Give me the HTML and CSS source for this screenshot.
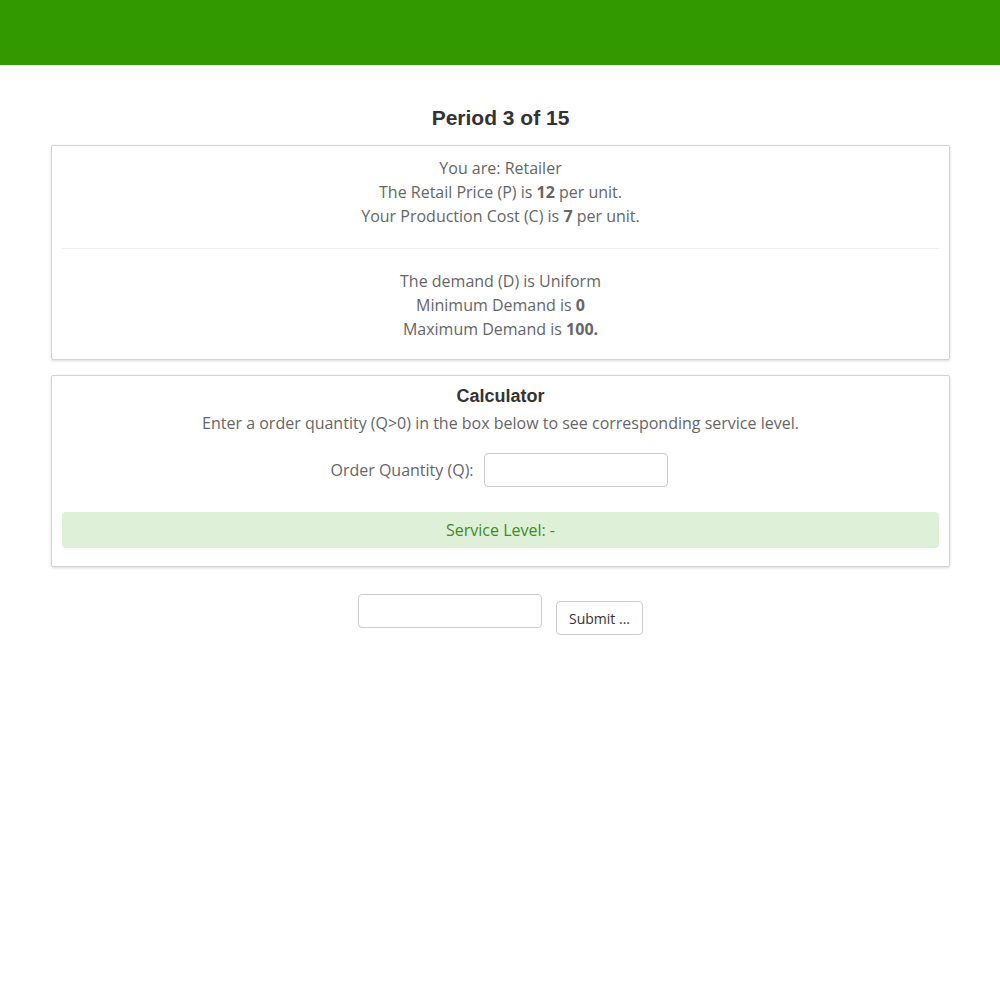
FILE: index.html
```html
<!DOCTYPE html>
<html lang="en">
<head>
    <meta charset="UTF-8">
    <meta name="viewport" content="width=device-width, initial-scale=1.0">
    <title>Period 3 of 15</title>
    <link rel="stylesheet" href="styles.css">
</head>
<body>
    <div class="topbar"></div>

    <div class="container">
        <h2 class="period-title">Period 3 of 15</h2>

        <div class="panel">
            <div class="info-block">
                <p>You are: Retailer</p>
                <p>The Retail Price (P) is <b>12</b> per unit.</p>
                <p>Your Production Cost (C) is <b>7</b> per unit.</p>
            </div>
            <hr>
            <div class="info-block last">
                <p>The demand (D) is Uniform</p>
                <p>Minimum Demand is <b>0</b></p>
                <p>Maximum Demand is <b>100.</b></p>
            </div>
        </div>

        <div class="panel calc">
            <h3>Calculator</h3>
            <p>Enter a order quantity (Q&gt;0) in the box below to see corresponding service level.</p>
            <div class="calc-row">
                <label for="q">Order Quantity (Q):</label>
                <input type="text" id="q" class="form-control">
            </div>
            <div class="alert-success">Service Level: -</div>
        </div>

        <form class="submit-form" onsubmit="return false;">
            <input type="text" class="form-control">
            <button type="submit" class="btn">Submit ...</button>
        </form>
    </div>
</body>
</html>
```

FILE: styles.css
```css
body {
    margin: 0;
    font-family: 'Open Sans', sans-serif;
    font-size: 16px;
    line-height: 24px;
    color: #666;
    background-color: #fff;
}

.topbar {
    height: 65px;
    background-color: #339900;
}

.container {
    width: 899px;
    margin: 0 auto;
    padding-top: 40px;
    padding-left: 1px;
}

.period-title {
    margin: 0 0 14px;
    font-family: 'Liberation Sans', Arial, sans-serif;
    font-size: 21px;
    line-height: 26px;
    font-weight: bold;
    color: #333;
    text-align: center;
}

.panel {
    border: 1px solid #d4d4d4;
    border-radius: 2px;
    box-shadow: 0 1px 3px rgba(0, 0, 0, 0.15);
    padding: 10px 10px 8px;
    margin-bottom: 15px;
    text-align: center;
}

.info-block p {
    margin: 0;
}

.info-block.last {
    margin-bottom: 10px;
}

.panel hr {
    border: 0;
    border-top: 1px solid #eee;
    margin: 20px 0;
}

.calc {
    padding-bottom: 18px;
}

.calc h3 {
    margin: 0 0 5px;
    font-family: 'Liberation Sans', Arial, sans-serif;
    font-size: 18px;
    line-height: 20px;
    font-weight: bold;
    color: #333;
}

.calc p {
    margin: 0;
}

.calc-row {
    display: flex;
    justify-content: center;
    align-items: center;
    gap: 10px;
    margin: 18px 0 25px;
    padding-right: 3px;
}

.form-control {
    width: 184px;
    height: 34px;
    box-sizing: border-box;
    border: 1px solid #ccc;
    border-radius: 4px;
    padding: 6px 12px;
    font-family: 'Open Sans', sans-serif;
    font-size: 14px;
    color: #555;
    background-color: #fff;
}

.alert-success {
    background-color: #dff0d8;
    color: #3c8b26;
    border-radius: 4px;
    height: 36px;
    line-height: 36px;
}

.submit-form {
    display: flex;
    justify-content: center;
    align-items: flex-start;
    gap: 14px;
    margin-top: 27px;
}

.btn {
    margin-top: 7px;
    height: 34px;
    width: 87px;
    padding: 0;
    border: 1px solid #ccc;
    border-radius: 4px;
    background-color: #fff;
    font-family: 'Open Sans', sans-serif;
    font-size: 14px;
    color: #333;
    cursor: pointer;
}
```
